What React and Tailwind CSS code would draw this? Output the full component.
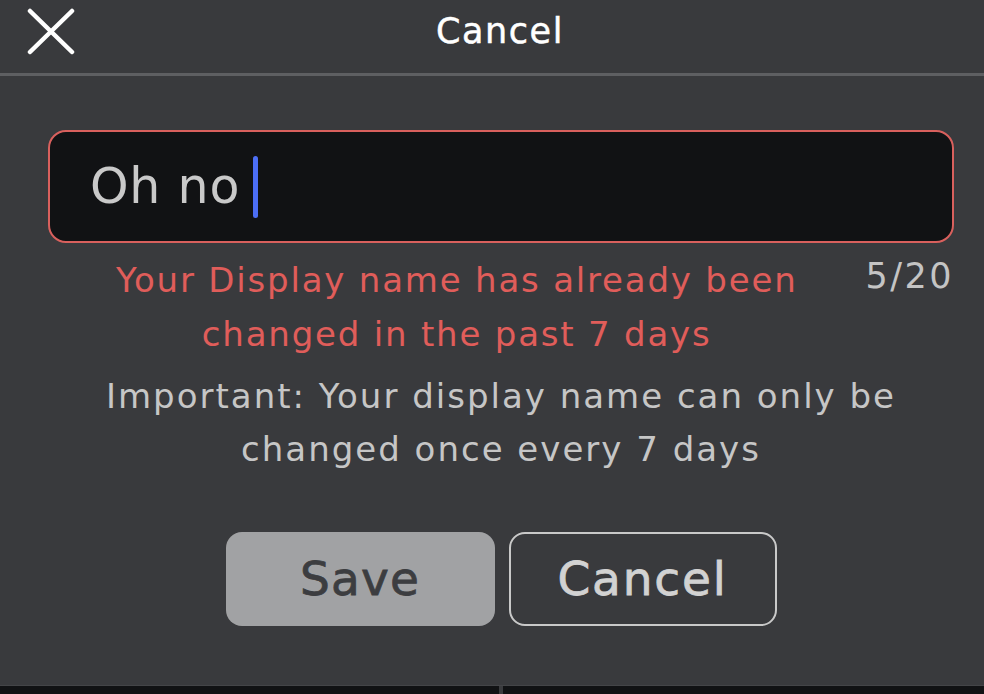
const App = () => {
  return (
    <div className="w-[984px] h-[694px] bg-[#393a3d] flex flex-col overflow-hidden" style={{ fontFamily: '"DejaVu Sans", "Open Sans", sans-serif' }}>
      {/* header */}
      <div className="relative h-[76px] flex items-center justify-center pl-[16px] border-b-[3px] border-[#5e5f62] shrink-0">
        <button className="absolute left-[27px] top-[8px] w-[48px] h-[47px]">
          <svg viewBox="0 0 48 47" className="w-full h-full" fill="none" stroke="white" strokeWidth="4.5" strokeLinecap="round">
            <line x1="3" y1="3" x2="45" y2="44" />
            <line x1="45" y1="3" x2="3" y2="44" />
          </svg>
        </button>
        <span className="text-[35px] text-white leading-none -mt-[11px] tracking-[1.6px] [-webkit-text-stroke:0.5px]">Cancel</span>
      </div>

      {/* body */}
      <div className="flex-1 flex flex-col ml-[48px] mr-[30px] pt-[54px]">
        <div className="h-[113px] rounded-[18px] border-[2.5px] border-[#d9605d] bg-[#111214] flex items-center pl-[40px]">
          <span className="text-[49px] text-[#c9c9c9] leading-none tracking-[0.8px]">Oh no</span>
          <span className="ml-[13px] w-[5px] h-[62px] rounded-full bg-[#4c6ef5]" />
        </div>

        <div className="flex mt-[10px]">
          <p className="flex-1 text-center text-[34px] leading-[54px] text-[#e05d5a] tracking-[1.8px]">
            Your Display name has already been
            <br />
            changed in the past 7 days
          </p>
          <span className="text-[35px] leading-[46px] text-[#c4c4c4] tracking-[2.5px]">5/20</span>
        </div>

        <p className="mt-[9px] text-center text-[34px] leading-[53px] text-[#c6c6c6] tracking-[2px]">
          Important: Your display name can only be
          <br />
          changed once every 7 days
        </p>

        <div className="flex justify-center gap-[14px] mt-[56px]">
          <button className="w-[269px] h-[94px] rounded-[16px] bg-[#a1a2a4] text-[47px] text-[#3c3d40] tracking-[1.2px] [-webkit-text-stroke:0.8px]">Save</button>
          <button className="w-[268px] h-[94px] rounded-[16px] border-[2.5px] border-[#c9c9c9] text-[47px] text-[#d2d2d2] tracking-[1.8px] [-webkit-text-stroke:0.8px]">Cancel</button>
        </div>
      </div>

      {/* bottom strip */}
      <div className="h-[9px] shrink-0 border-t border-[#444548] bg-[#111214] flex">
        <div className="w-[499px]" />
        <div className="w-[4px] bg-[#3a3b3e]" />
      </div>
    </div>
  );
};

export default App;
